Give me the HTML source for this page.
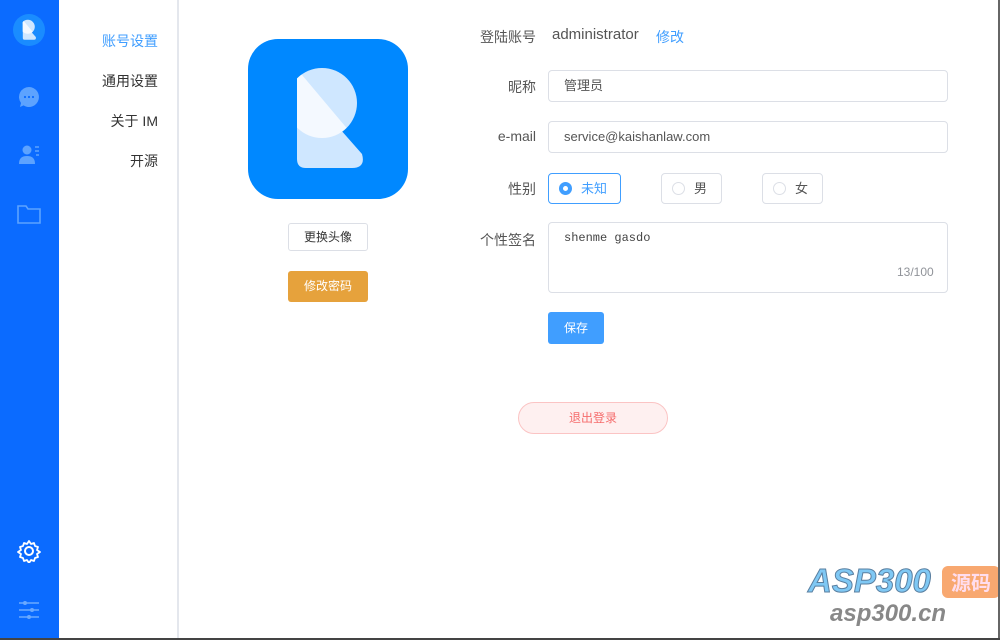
<!DOCTYPE html>
<html><head><meta charset="utf-8"><style>
*{margin:0;padding:0;box-sizing:border-box}
body{width:1000px;height:640px;position:relative;background:#fff;font-family:"Liberation Sans","Noto Sans CJK SC",sans-serif;overflow:hidden;font-size:14px;color:#333}
.side{position:absolute;left:0;top:0;width:59px;height:640px;background:#0b6bff}
.abs{position:absolute}
.menu{position:absolute;right:842px;font-size:14px;color:#333;text-align:right;white-space:nowrap}
.lbl{position:absolute;font-size:14px;color:#555;text-align:right;width:80px;left:456px}
.inp{position:absolute;left:548px;width:400px;height:32px;border:1px solid #dcdfe6;border-radius:4px;padding-left:15px;line-height:30px;font-size:13px;color:#555}
.radio{position:absolute;top:173px;width:61px;height:31px;border:1px solid #dcdfe6;border-radius:4px;font-size:13px;color:#555;line-height:29px;padding-left:32px}
.radio i{position:absolute;left:10px;top:8px;width:13px;height:13px;border:1px solid #dcdfe6;border-radius:50%}
</style></head><body>
<svg width="0" height="0" style="position:absolute"><defs>
<clipPath id="cc"><circle cx="74" cy="64" r="35"/></clipPath>
<clipPath id="cx"><rect x="49" y="0" width="111" height="160"/></clipPath>
<g id="R"><g clip-path="url(#cx)"><circle cx="74" cy="64" r="35" fill="#cfe7ff"/></g><path d="M49 44Q49 37 55 41L92 90L114 115Q118 129 104 129L58 129Q49 129 49 120Z" fill="#cfe7ff"/><g clip-path="url(#cx)"><path d="M49 30L102 93L102 110L40 110Z" fill="#f4f9ff" clip-path="url(#cc)"/></g><path d="M49 44Q49 37 55 41L62 49L49 49Z" fill="#f4f9ff"/></g>
</defs></svg>
<div class="side">
 <svg class="abs" style="left:13px;top:14px" width="32" height="32" viewBox="0 0 160 160"><circle cx="80" cy="80" r="80" fill="#1a8cff"/><use href="#R"/></svg>
 <svg class="abs" style="left:17px;top:85px" width="24" height="24" viewBox="0 0 24 24"><path d="M12 2a10 10 0 1 1-5.5 18.4L3 22l1-4A10 10 0 0 1 12 2z" fill="#5da3ff"/><circle cx="8" cy="12" r="1.1" fill="#0b6bff"/><circle cx="12" cy="12" r="1.1" fill="#0b6bff"/><circle cx="16" cy="12" r="1.1" fill="#0b6bff"/></svg>
 <svg class="abs" style="left:18px;top:144px" width="24" height="22" viewBox="0 0 24 22"><circle cx="9" cy="6" r="4.5" fill="#5da3ff"/><path d="M1 20c0-6 3-8 8-8s8 2 8 8z" fill="#5da3ff"/><path d="M17 3h4M17 7h4M18 11h3" stroke="#5da3ff" stroke-width="1.5"/></svg>
 <svg class="abs" style="left:17px;top:204px" width="24" height="20" viewBox="0 0 24 20"><path d="M1 2h8l2 3h12v14H1z" fill="none" stroke="#5da3ff" stroke-width="1.6"/></svg>
 <svg class="abs" style="left:17px;top:539px" width="24" height="24" viewBox="0 0 24 24"><circle cx="12" cy="12" r="4" fill="none" stroke="#fff" stroke-width="2"/><path d="M12 2l2 3 3-1 1 3 3 1-1 3 3 2-3 2 1 3-3 1-1 3-3-1-2 3-2-3-3 1-1-3-3-1 1-3-3-2 3-2-1-3 3-1 1-3 3 1z" fill="none" stroke="#fff" stroke-width="1.8" stroke-linejoin="round"/></svg>
 <svg class="abs" style="left:18px;top:600px" width="22" height="20" viewBox="0 0 22 20"><path d="M1 3h20M1 10h20M1 17h20" stroke="#6aa9ff" stroke-width="1.6"/><circle cx="7" cy="3" r="2" fill="#6aa9ff"/><circle cx="14" cy="10" r="2" fill="#6aa9ff"/><circle cx="11" cy="17" r="2" fill="#6aa9ff"/></svg>
</div>
<div class="menu" style="top:31px;color:#409eff">账号设置</div>
<div class="menu" style="top:71px">通用设置</div>
<div class="menu" style="top:111px">关于 IM</div>
<div class="menu" style="top:151px">开源</div>
<div class="abs" style="left:177px;top:0;width:2px;height:640px;background:#e4e7ed"></div>
<svg class="abs" style="left:248px;top:39px" width="160" height="160" viewBox="0 0 160 160"><rect width="160" height="160" rx="30" fill="#0088ff"/><use href="#R"/></svg>
<div class="abs" style="left:288px;top:223px;width:80px;height:28px;border:1px solid #dcdfe6;border-radius:3px;font-size:12px;line-height:26px;text-align:center;color:#333">更换头像</div>
<div class="abs" style="left:288px;top:271px;width:80px;height:31px;background:#e6a23c;border-radius:3px;font-size:12px;line-height:31px;text-align:center;color:#fff">修改密码</div>
<div class="lbl" style="top:27px">登陆账号</div>
<div class="abs" style="left:552px;top:26px;font-size:15px;color:#555">administrator</div>
<div class="abs" style="left:656px;top:27px;color:#409eff">修改</div>
<div class="lbl" style="top:77px">昵称</div>
<div class="inp" style="top:70px">管理员</div>
<div class="lbl" style="top:128px">e-mail</div>
<div class="inp" style="top:121px">service@kaishanlaw.com</div>
<div class="lbl" style="top:179px">性别</div>
<div class="radio" style="left:548px;border-color:#409eff;color:#409eff;width:73px"><i style="border:4px solid #409eff;background:#fff"></i>未知</div>
<div class="radio" style="left:661px"><i></i>男</div>
<div class="radio" style="left:762px"><i></i>女</div>
<div class="lbl" style="top:230px">个性签名</div>
<div class="abs" style="left:548px;top:222px;width:400px;height:71px;border:1px solid #dcdfe6;border-radius:4px;padding:8px 15px;font-family:'Liberation Mono',monospace;font-size:12px;color:#444">shenme gasdo</div>
<div class="abs" style="left:897px;top:265px;font-size:12px;color:#909399">13/100</div>
<div class="abs" style="left:548px;top:312px;width:56px;height:32px;background:#409eff;border-radius:3px;color:#fff;font-size:12px;line-height:32px;text-align:center">保存</div>
<div class="abs" style="left:518px;top:402px;width:150px;height:32px;background:#fef0f0;border:1px solid #fbc4c4;border-radius:16px;color:#f56c6c;font-size:12px;line-height:30px;text-align:center">退出登录</div>
<div class="abs" style="left:808px;top:562px;font:italic bold 33px 'Liberation Sans',sans-serif;color:#7fc8f4;-webkit-text-stroke:1px #5a7fa0">ASP300</div>
<div class="abs" style="left:942px;top:566px;width:58px;height:32px;background:#f8a870;border-radius:6px;color:#fde;font:bold 20px 'Noto Sans CJK SC',sans-serif;line-height:32px;text-align:center">源码</div>
<div class="abs" style="left:830px;top:600px;font:italic bold 24px 'Liberation Sans',sans-serif;color:#888">asp300.cn</div>
<div class="abs" style="left:998px;top:0;width:2px;height:640px;background:#666"></div>
<div class="abs" style="left:0;top:638px;width:1000px;height:2px;background:#444"></div>
</body></html>
